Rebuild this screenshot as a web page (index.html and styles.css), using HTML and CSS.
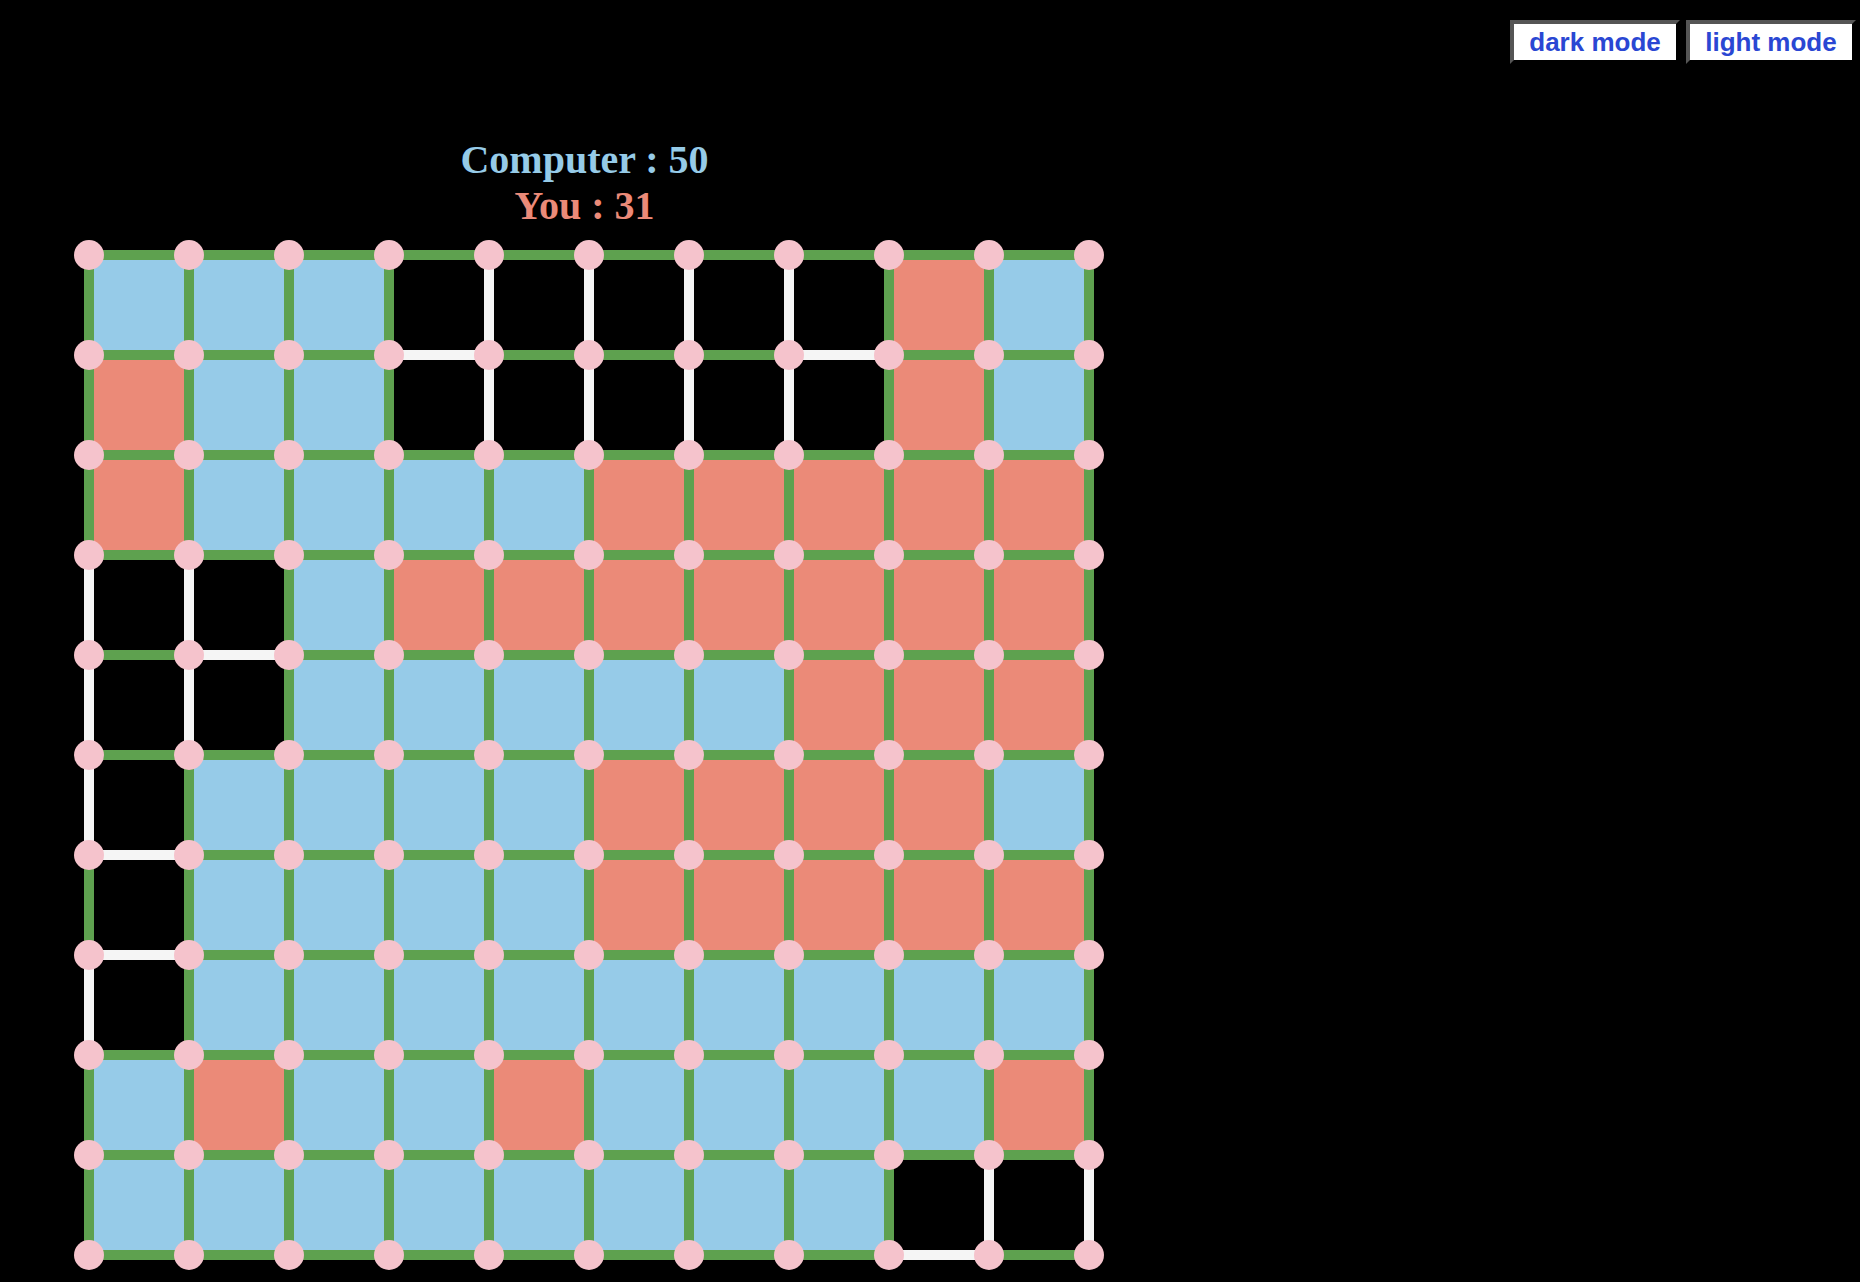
FILE: index.html
```html
<!DOCTYPE html>
<html lang="en">
<head>
   <meta charset="utf-8">
   <title>Dots and Boxes</title>
   <link rel="stylesheet" href="styles.css">
   <script src="script.js"></script>
</head>
<body>
   <div id="page">
      <div id="modes">
         <button id="darkBtn">dark mode</button>
         <button id="lightBtn">light mode</button>
      </div>
      <div id="score">
         <div id="computerScore">Computer : 50</div>
         <div id="playerScore">You : 31</div>
      </div>
      <svg id="board" width="1030" height="1030" xmlns="http://www.w3.org/2000/svg"></svg>
   </div>
</body>
</html>
```

FILE: styles.css
```css
/* page */
html, body {
   margin: 0;
   padding: 0;
}
body {
   background-color: black;
}
#page {
   width: 100%;
}

/* mode buttons */
#modes {
   display: flex;
   justify-content: flex-end;
   gap: 6px;
   padding: 20px 4px 0 0;
}
#modes button {
   box-sizing: border-box;
   width: 170px;
   height: 44px;
   padding: 0;
   border: 4px solid;
   border-color: #555555 #000000 #000000 #555555;
   background-color: white;
   color: #2a47d3;
   font-family: "Liberation Sans", Arial, sans-serif;
   font-weight: bold;
   font-size: 26px;
   line-height: 30px;
}

/* score */
#score {
   width: 1169px;
   margin-top: 73px;
   text-align: center;
   font-family: "Liberation Serif", "Times New Roman", serif;
   font-weight: bold;
   font-size: 40px;
   line-height: 46px;
}
#computerScore {
   color: #96cbe8;
}
#playerScore {
   color: #eb8a78;
}

/* board */
#board {
   display: block;
   margin: 11px 0 0 74px;
}
.cell-B {
   fill: #96cbe8;
}
.cell-R {
   fill: #eb8a78;
}
.line-on {
   fill: #5ea14f;
}
.line-off {
   fill: #f5f5f5;
}
.dot {
   fill: #f5c3cc;
}
```

FILE: script.js
```js
window.onload = function() {
   var SIZE = 10, STEP = 100, OFF = 15, W = 10;
   var NS = "http://www.w3.org/2000/svg";
   var board = document.getElementById("board");

   // B = computer box, R = player box, . = open
   var cells = [
      "BBB.....RB",
      "RBB.....RB",
      "RBBBBRRRRR",
      "..BRRRRRRR",
      "..BBBBBRRR",
      ".BBBBRRRRB",
      ".BBBBRRRRR",
      ".BBBBBBBBB",
      "BRBBRBBBBR",
      "BBBBBBBB.."
   ];

   // lines drawn next to open boxes only
   var extraH = {"0-3":1, "0-4":1, "0-5":1, "0-6":1, "0-7":1, "1-4":1, "1-5":1, "1-6":1, "4-0":1, "5-0":1, "10-9":1};
   var extraV = {"6-0":1};

   function filled(r, c) {
      if (r < 0 || c < 0 || r >= SIZE || c >= SIZE) return false;
      return cells[r].charAt(c) != ".";
   }

   function rect(x, y, w, h, cls) {
      var el = document.createElementNS(NS, "rect");
      el.setAttribute("x", x);
      el.setAttribute("y", y);
      el.setAttribute("width", w);
      el.setAttribute("height", h);
      el.setAttribute("class", cls);
      board.appendChild(el);
   }

   var r, c;
   for (r = 0; r < SIZE; r++) {
      for (c = 0; c < SIZE; c++) {
         var ch = cells[r].charAt(c);
         if (ch != ".") rect(OFF + c*STEP, OFF + r*STEP, STEP, STEP, "cell-" + ch);
      }
   }

   // horizontal lines
   for (r = 0; r <= SIZE; r++) {
      for (c = 0; c < SIZE; c++) {
         var onH = filled(r - 1, c) || filled(r, c) || extraH[r + "-" + c];
         rect(OFF + c*STEP, OFF + r*STEP - W/2, STEP, W, onH ? "line-on" : "line-off");
      }
   }

   // vertical lines
   for (r = 0; r < SIZE; r++) {
      for (c = 0; c <= SIZE; c++) {
         var onV = filled(r, c - 1) || filled(r, c) || extraV[r + "-" + c];
         rect(OFF + c*STEP - W/2, OFF + r*STEP, W, STEP, onV ? "line-on" : "line-off");
      }
   }

   // dots
   for (r = 0; r <= SIZE; r++) {
      for (c = 0; c <= SIZE; c++) {
         var dot = document.createElementNS(NS, "circle");
         dot.setAttribute("cx", OFF + c*STEP);
         dot.setAttribute("cy", OFF + r*STEP);
         dot.setAttribute("r", 15);
         dot.setAttribute("class", "dot");
         board.appendChild(dot);
      }
   }
};
```
